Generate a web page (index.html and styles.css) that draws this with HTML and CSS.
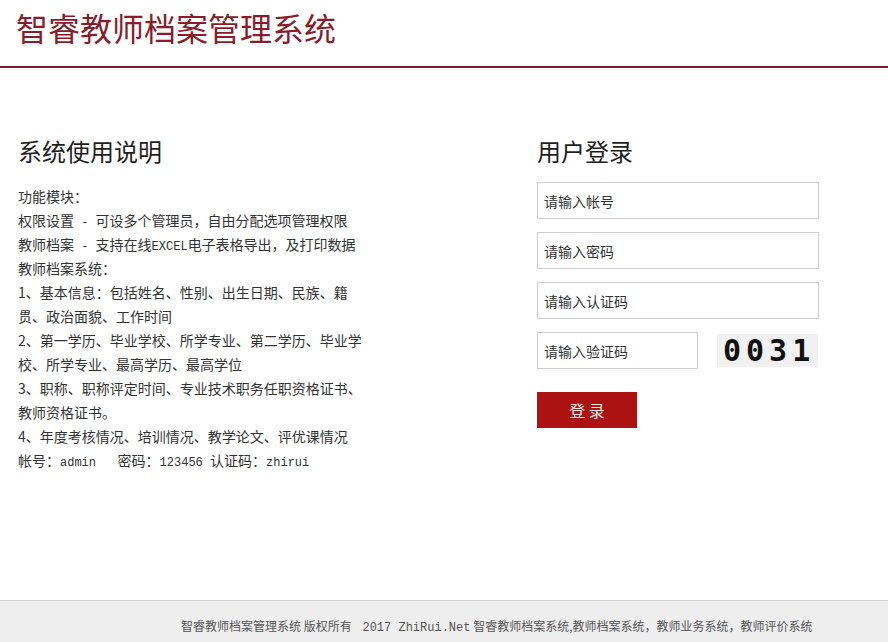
FILE: index.html
```html
<!DOCTYPE html>
<html lang="zh-CN">
<head>
<meta charset="utf-8">
<title>智睿教师档案管理系统</title>
<link rel="stylesheet" href="styles.css">
</head>
<body>
<header class="site-header">
  <h1 class="site-title">智睿教师档案管理系统</h1>
</header>
<main class="main">
  <section class="intro">
    <h2 class="section-title">系统使用说明</h2>
    <div class="intro-text">
      <p>功能模块：</p>
      <p>权限设置<span class="mono"> - </span>可设多个管理员，自由分配选项管理权限</p>
      <p>教师档案<span class="mono"> - </span>支持在线<span class="mono">EXCEL</span>电子表格导出，及打印数据</p>
      <p>教师档案系统：</p>
      <p>1、基本信息：包括姓名、性别、出生日期、民族、籍<br>贯、政治面貌、工作时间</p>
      <p>2、第一学历、毕业学校、所学专业、第二学历、毕业学<br>校、所学专业、最高学历、最高学位</p>
      <p>3、职称、职称评定时间、专业技术职务任职资格证书、<br>教师资格证书。</p>
      <p>4、年度考核情况、培训情况、教学论文、评优课情况</p>
      <p>帐号：<span class="mono">admin   </span>密码：<span class="mono">123456 </span>认证码：<span class="mono">zhirui</span></p>
    </div>
  </section>
  <section class="login">
    <h2 class="section-title">用户登录</h2>
    <form class="login-form">
      <input class="field" type="text" placeholder="请输入帐号">
      <input class="field" type="password" placeholder="请输入密码">
      <input class="field" type="text" placeholder="请输入认证码">
      <div class="captcha-row">
        <input class="field field-short" type="text" placeholder="请输入验证码">
        <div class="captcha">0031</div>
      </div>
      <button class="btn-login" type="button">登 录</button>
    </form>
  </section>
</main>
<footer class="site-footer">
  <p class="footer-text">智睿教师档案管理系统 版权所有&nbsp;&nbsp;&nbsp;&nbsp;<span class="mono">2017 ZhiRui.Net</span> 智睿教师档案系统,教师档案系统，教师业务系统，教师评价系统</p>
</footer>
</body>
</html>
```
FILE: styles.css
```css
* { box-sizing: border-box; }
html, body { margin: 0; padding: 0; }
body {
  height: 642px;
  display: flex;
  flex-direction: column;
  background: #fff;
  font-family: "Noto Sans CJK SC", "Noto Sans", sans-serif;
  color: #333;
}
.site-header {
  height: 68px;
  padding: 7px 0 0 16px;
  border-bottom: 2px solid #7d1b2b;
}
.site-title {
  margin: 0;
  font-size: 32px;
  line-height: 40px;
  font-weight: normal;
  color: #8a1c2a;
}
.main {
  flex: 1;
  display: grid;
  grid-template-columns: 342px 282px;
  column-gap: 177px;
  padding: 68px 0 0 18px;
  align-items: start;
}
.section-title {
  margin: 0 0 18px;
  font-size: 24px;
  line-height: 30px;
  font-weight: normal;
  color: #1e1e1e;
}
.intro-text {
  font-size: 14px;
  line-height: 24px;
  color: #333;
  white-space: nowrap;
}
.intro-text p { margin: 0; height: auto; }
.mono {
  font-family: "Liberation Mono", monospace;
  font-size: 12px;
  line-height: 1;
  white-space: pre;
}
.login-form {
  display: flex;
  flex-direction: column;
  gap: 13px;
  margin-top: -2px;
}
.field {
  display: block;
  width: 282px;
  height: 37px;
  border: 1px solid #cfcfcf;
  padding: 0 6px;
  font-family: "Noto Sans CJK SC", sans-serif;
  font-size: 14px;
  color: #333;
  background: #fff;
  outline: none;
}
.field::placeholder { color: #333; opacity: 1; }
.captcha-row {
  display: flex;
  align-items: center;
  gap: 19px;
}
.field-short { width: 161px; }
.captcha {
  width: 101px;
  height: 33px;
  background: #f1f1f1;
  font-family: "DejaVu Sans Mono", monospace;
  font-weight: bold;
  font-size: 30px;
  line-height: 33px;
  letter-spacing: 5px;
  padding-left: 6px;
  color: #111;
}
.btn-login {
  margin-top: 10px;
  width: 100px;
  height: 36px;
  border: none;
  background: #ad1212;
  color: #f7e6e6;
  font-family: "Noto Sans CJK SC", sans-serif;
  font-size: 16px;
  cursor: pointer;
}
.site-footer {
  height: 42px;
  border-top: 1px solid #d2d2d2;
  background: #eeeeee;
  padding: 16px 0 0 181px;
}
.footer-text {
  margin: 0;
  font-size: 12px;
  line-height: 18px;
  color: #555;
  white-space: nowrap;
}
```
